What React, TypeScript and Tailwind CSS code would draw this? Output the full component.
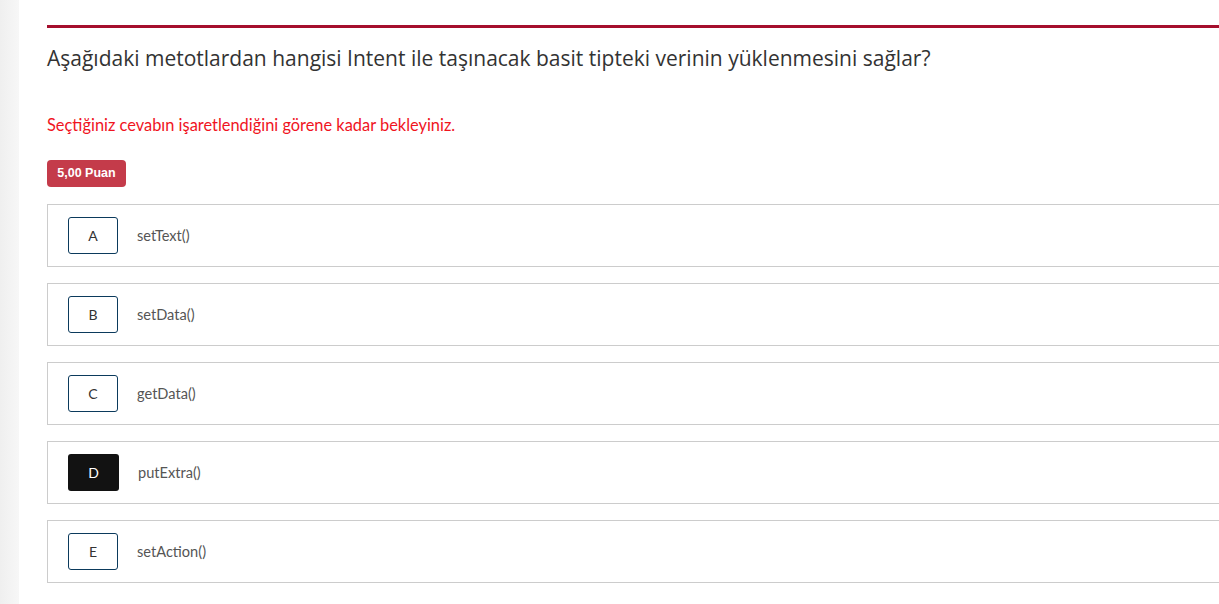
import React from "react";

const options = [
  { letter: "A", text: "setText()", selected: false },
  { letter: "B", text: "setData()", selected: false },
  { letter: "C", text: "getData()", selected: false },
  { letter: "D", text: "putExtra()", selected: true },
  { letter: "E", text: "setAction()", selected: false },
];

export default function App() {
  return (
    <div className="flex w-[1219px] h-[604px] overflow-hidden bg-white">
      <div className="w-[19px] shrink-0 bg-gradient-to-r from-[#efefef] to-[#f7f7f7]" />
      <div className="flex-1 pl-[28px] pt-[25px]">
        <div className="h-[3px] w-[1200px] bg-[#a50f2d]" />
        <h1
          className="mt-[16px] text-[21px] leading-[28px] text-[#333]"
          style={{ fontFamily: '"Open Sans", sans-serif' }}
        >
          Aşağıdaki metotlardan hangisi Intent ile taşınacak basit tipteki verinin yüklenmesini sağlar?
        </h1>
        <p
          className="mt-[43px] text-[16.4px] leading-[20px] text-[#f0141e]"
          style={{ fontFamily: 'Lato, sans-serif' }}
        >
          Seçtiğiniz cevabın işaretlendiğini görene kadar bekleyiniz.
        </p>
        <div
          className="mt-[25px] flex h-[27px] w-[79px] items-center justify-center rounded-[4px] bg-[#c43b4a] text-[12.5px] font-bold text-white"
          style={{ fontFamily: '"Liberation Sans", Arial, sans-serif' }}
        >
          5,00 Puan
        </div>
        <div className="mt-[17px] flex flex-col gap-[16px]">
          {options.map((o) => (
            <div
              key={o.letter}
              className="flex h-[63px] w-[1200px] items-center border border-[#cccccc] pl-[20px]"
              style={{ fontFamily: 'Lato, sans-serif' }}
            >
              <div
                className={
                  o.selected
                    ? "flex h-[37px] w-[51px] items-center justify-center rounded-[3px] bg-[#121212] text-[14px] text-white"
                    : "flex h-[37px] w-[50px] items-center justify-center rounded-[3px] border border-[#0b3a5c] text-[14px] text-[#333]"
                }
              >
                {o.letter}
              </div>
              <span className="ml-[19px] text-[14.6px] text-[#555]">{o.text}</span>
            </div>
          ))}
        </div>
      </div>
    </div>
  );
}
